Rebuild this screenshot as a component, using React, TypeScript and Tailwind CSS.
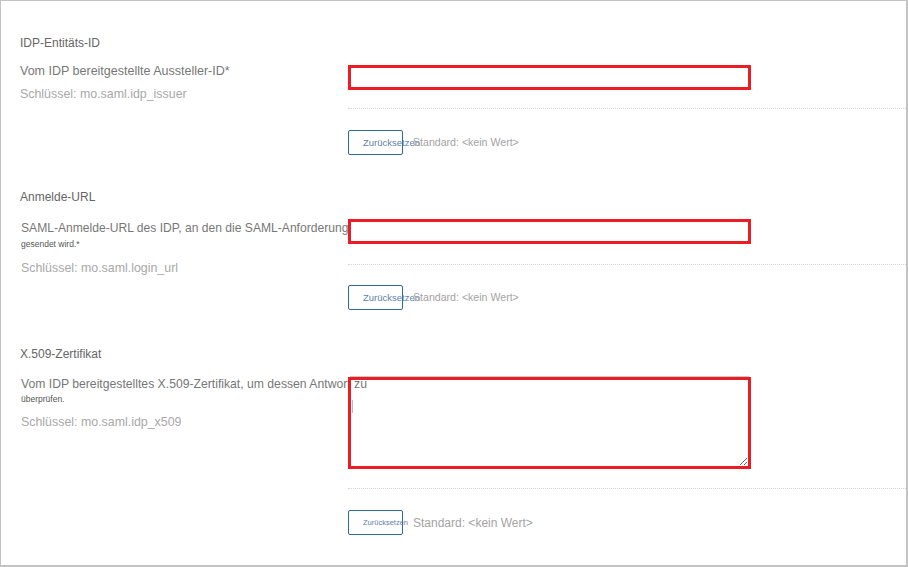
import React from 'react'

const FONT = { fontFamily: '"Liberation Sans", Arial, sans-serif' }

function ResetRow({ small = false }: { small?: boolean }) {
  return (
    <div className="flex items-center">
      <button className="flex h-[25px] w-[55px] shrink-0 items-center overflow-visible whitespace-nowrap rounded-[2px] border border-[#2c6b99] bg-white pl-[14px] text-left">
        <span className={small ? 'text-[7.5px] leading-none text-[#5f82aa]' : 'text-[9.5px] leading-none text-[#5f82aa]'}>
          Zurücksetzen
        </span>
      </button>
      <span className={small ? 'ml-[10px] text-[12px] text-[#a3a3a3]' : 'ml-[10px] text-[10.6px] text-[#a3a3a3]'}>
        Standard: &lt;kein Wert&gt;
      </span>
    </div>
  )
}

export default function App() {
  return (
    <div className="h-[567px] w-[908px] overflow-hidden bg-white" style={FONT}>
      <div className="h-full w-full border-t border-l border-r-2 border-b-2 border-[#c3c3c3]">
        {/* ── IDP-Entitäts-ID ───────────────────────────── */}
        <div className="pt-[33px]">
          <div className="pl-[19px] text-[12px] leading-[18px] text-[#666]">IDP-Entitäts-ID</div>
          <div className="mt-[10px] grid grid-cols-[347px_1fr]">
            <div className="pl-[19px]">
              <div className="whitespace-nowrap text-[12.5px] leading-[18px] text-[#777]">Vom IDP bereitgestellte Aussteller-ID*</div>
              <div className="mt-[5px] text-[12.4px] leading-[18px] text-[#a8a8a8]">Schlüssel: mo.saml.idp_issuer</div>
            </div>
            <div>
              <div className="mt-[3px] h-[25px] w-[403px] border-[3px] border-[#ed1c24] bg-transparent" />
              <div className="mt-[18px] border-t border-dotted border-[#d6d6d6]" />
              <div className="mt-[21px]">
                <ResetRow />
              </div>
            </div>
          </div>
        </div>

        {/* ── Anmelde-URL ───────────────────────────────── */}
        <div className="pt-[33px]">
          <div className="pl-[19px] text-[12px] leading-[18px] text-[#666]">Anmelde-URL</div>
          <div className="mt-[13px] grid grid-cols-[347px_1fr]">
            <div className="pl-[20px]">
              <div className="whitespace-nowrap text-[12.1px] leading-[18px] text-[#777]">
                SAML-Anmelde-URL des IDP, an den die SAML-Anforderung
              </div>
              <div className="text-[8.5px] leading-[14px] text-[#555]">gesendet wird.*</div>
              <div className="mt-[8px] text-[12.4px] leading-[18px] text-[#a8a8a8]">Schlüssel: mo.saml.login_url</div>
            </div>
            <div>
              <div className="h-[25px] w-[403px] border-[3px] border-[#ed1c24] bg-transparent" />
              <div className="mt-[20px] border-t border-dotted border-[#d6d6d6]" />
              <div className="mt-[20px]">
                <ResetRow />
              </div>
            </div>
          </div>
        </div>

        {/* ── X.509-Zertifikat ──────────────────────────── */}
        <div className="pt-[35px]">
          <div className="pl-[19px] text-[12px] leading-[18px] text-[#666]">X.509-Zertifikat</div>
          <div className="mt-[12px] grid grid-cols-[347px_1fr]">
            <div className="pl-[20px]">
              <div className="whitespace-nowrap text-[12.2px] leading-[18px] text-[#777]">
                Vom IDP bereitgestelltes X.509-Zertifikat, um dessen Antwort zu
              </div>
              <div className="mt-[-1px] text-[8.5px] leading-[14px] text-[#555]">überprüfen.</div>
              <div className="mt-[7px] text-[12.4px] leading-[18px] text-[#a8a8a8]">Schlüssel: mo.saml.idp_x509</div>
            </div>
            <div>
              <div className="relative mt-[1px] w-[403px]">
                <div className="mx-[2px] border-t border-[#c8c8c8]" />
                <textarea className="block h-[92px] w-[403px] border-[3px] border-[#ed1c24] bg-transparent outline-none" />
                <div className="pointer-events-none absolute left-[4px] top-[24px] h-[13px] w-px bg-[#bbb]" />
              </div>
              <div className="mt-[19px] border-t border-dotted border-[#d6d6d6]" />
              <div className="mt-[21px]">
                <ResetRow small />
              </div>
            </div>
          </div>
        </div>
      </div>
    </div>
  )
}
